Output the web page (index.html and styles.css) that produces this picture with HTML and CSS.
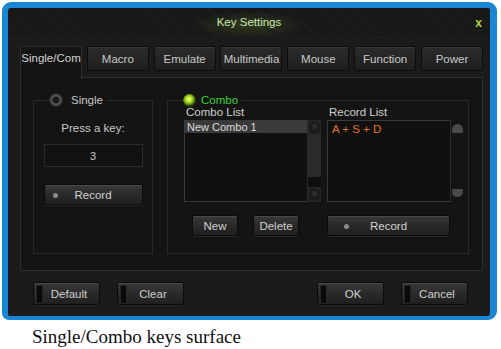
FILE: index.html
```html
<!DOCTYPE html>
<html>
<head>
<meta charset="utf-8">
<link rel="stylesheet" href="styles.css">
</head>
<body>
<div class="window">
  <div class="titlebar">
    <span></span>
    <span class="title">Key Settings</span>
    <span class="close">x</span>
  </div>
  <div class="tabs">
    <div class="tab active">Single/Com</div>
    <div class="tab">Macro</div>
    <div class="tab">Emulate</div>
    <div class="tab">Multimedia</div>
    <div class="tab">Mouse</div>
    <div class="tab">Function</div>
    <div class="tab">Power</div>
  </div>
  <div class="panel">
    <div class="group single">
      <div class="group-head">
        <span class="radio"></span><span class="head-text">Single</span>
      </div>
      <div class="press">Press a key:</div>
      <div class="keybox">3</div>
      <div class="btn rec rec-left">Record</div>
    </div>
    <div class="group combo">
      <div class="group-head">
        <span class="radio on"></span><span class="head-text green">Combo</span>
      </div>
      <div class="cols">
        <div class="col">
          <div class="label">Combo List</div>
          <div class="listwrap">
            <div class="list">
              <div class="item sel">New Combo 1</div>
            </div>
            <div class="sbar">
              <div class="sb-btn up"></div>
              <div class="sb-track"></div>
              <div class="sb-thumb"></div>
              <div class="sb-btn down"></div>
            </div>
          </div>
          <div class="btnrow">
            <div class="btn small">New</div>
            <div class="btn small">Delete</div>
          </div>
        </div>
        <div class="col">
          <div class="label">Record List</div>
          <div class="listwrap">
            <div class="list">
              <div class="item orange">A + S + D</div>
            </div>
            <div class="sbar plain">
              <div class="arrow-up"></div>
              <div class="arrow-down"></div>
            </div>
          </div>
          <div class="btnrow">
            <div class="btn rec rec-right">Record</div>
          </div>
        </div>
      </div>
    </div>
  </div>
  <div class="footer">
    <div class="btn fbtn">Default</div>
    <div class="btn fbtn">Clear</div>
    <div class="btn fbtn push">OK</div>
    <div class="btn fbtn">Cancel</div>
  </div>
</div>
<p class="caption">Single/Combo keys surface</p>
</body>
</html>
```
FILE: styles.css
```css
* { box-sizing: border-box; }
html, body { margin: 0; padding: 0; background: #fff; }
body { width: 501px; height: 349px; overflow: hidden; }

.window {
  margin: 2px 0 0 2px;
  width: 495px;
  height: 318px;
  border-style: solid;
  border-color: #1a86d6;
  border-width: 6px 7px 4px 6px;
  border-radius: 9px 9px 9px 7px;
  background: #1b1b1b;
  font-family: "Liberation Sans", Arial, sans-serif;
  font-size: 11.5px;
  color: #c8c8c8;
  overflow: hidden;
}

.titlebar {
  height: 28px;
  display: grid;
  grid-template-columns: 1fr auto 1fr;
  align-items: center;
  background:
    radial-gradient(ellipse 60px 14px at 50% 60%, rgba(100,140,40,0.28), rgba(100,140,40,0) 100%),
    repeating-linear-gradient(45deg, #151515 0 1px, #1c1c1c 1px 2px);
  border-radius: 4px 4px 0 0;
}
.title {
  color: #cde6ac;
  font-size: 11.5px;
}
.close {
  justify-self: end;
  color: #b6d23a;
  font-size: 12px;
  font-weight: bold;
  padding: 2px 8px 0 0;
}

.tabs {
  margin: 10px 7px 0 12px;
  height: 32px;
  display: flex;
  justify-content: space-between;
  align-items: flex-start;
}
.tab {
  width: 62px;
  height: 25px;
  display: flex;
  align-items: center;
  justify-content: center;
  background: linear-gradient(#2b2b2b, #1f1f1f);
  border: 1px solid #0c0c0c;
  box-shadow: inset 0 1px 0 #383838;
  border-radius: 2px;
  white-space: nowrap;
  overflow: hidden;
  color: #c8c8c8;
}
.tab.active {
  height: 33px;
  align-items: flex-start;
  padding-top: 5px;
  background: #141414;
  border: 1px solid #2e2e2e;
  border-bottom: none;
  box-shadow: none;
  border-radius: 2px 2px 0 0;
  position: relative;
  z-index: 1;
  color: #d2d2d2;
}

.panel {
  margin: -1px 7px 0 12px;
  height: 194px;
  border: 1px solid #2e2e2e;
  background: #141414;
  padding: 22px 0 0 12px;
  display: flex;
  gap: 14px;
  align-items: flex-start;
}

.group {
  height: 154px;
  border: 1px solid #292929;
  display: flex;
  flex-direction: column;
}
.single { width: 120px; align-items: center; }
.combo { width: 302px; }

.group-head {
  align-self: flex-start;
  margin: -7px 0 0 15px;
  height: 12px;
  display: flex;
  align-items: center;
  background: #141414;
  padding-right: 3px;
}
.radio {
  flex: none;
  width: 14px;
  height: 14px;
  border-radius: 50%;
  background: radial-gradient(circle at 50% 50%, #1a1a1a 0 3px, #5a5a5a 4px, #3a3a3a 6px, #222 7px);
}
.radio.on {
  width: 13px;
  height: 13px;
  background: radial-gradient(circle at 45% 40%, #e8ff70 0 1px, #a8e020 3px, #6aa010 5px, #2a3a10 6.5px);
}
.head-text { margin-left: 8px; line-height: 12px; }
.green { color: #3cd23c; margin-left: 5px; }

.press {
  margin-top: 15px;
  line-height: 14px;
}
.keybox {
  margin-top: 9px;
  width: 99px;
  height: 23px;
  border: 1px solid #2a2a2a;
  background: #111;
  display: flex;
  align-items: center;
  justify-content: center;
  font-size: 11px;
  color: #c8c8c8;
}

.btn {
  display: flex;
  align-items: center;
  justify-content: center;
  background: linear-gradient(#393939, #2a2a2a 50%, #1f1f1f);
  border: 1px solid #0a0a0a;
  border-radius: 2px;
  box-shadow: inset 0 1px 0 #484848, 0 1px 0 #262626;
  color: #d0d0d0;
  white-space: nowrap;
}
.rec { position: relative; height: 21px; }
.rec::before {
  content: "";
  position: absolute;
  top: 8px;
  width: 5px;
  height: 5px;
  border-radius: 50%;
  background: #8a8a8a;
}
.rec-left { margin-top: 17px; width: 99px; }
.rec-left::before { left: 8px; }
.rec-right { width: 123px; }
.rec-right::before { left: 16px; }

.cols {
  display: flex;
  gap: 6px;
  margin: 0 0 0 16px;
}
.col { width: 137px; display: flex; flex-direction: column; }
.label {
  line-height: 12px;
  margin: 0 0 2px 2px;
  color: #d0d0d0;
}
.listwrap { display: flex; height: 82px; }
.list {
  width: 124px;
  height: 82px;
  border: 1px solid #383838;
  border-right-color: #2a2a2a;
  background: #101010;
}
.item {
  height: 12px;
  line-height: 12px;
  font-size: 11px;
  padding-left: 2px;
  white-space: nowrap;
}
.item.sel { background: #3a3a3a; color: #dcdcdc; }
.item.orange { color: #e8722c; padding-left: 4px; margin-top: 2px; font-size: 11.5px; }

.sbar {
  width: 13px;
  height: 82px;
  display: flex;
  flex-direction: column;
  background: #262626;
}
.sb-btn {
  height: 13px;
  background: #1c1c1c;
  border-radius: 6px;
  margin: 1px;
  position: relative;
}
.sb-btn::after {
  content: "";
  position: absolute;
  left: 3px; top: 3px;
  width: 5px; height: 5px;
  border-radius: 50%;
  background: #2e2e2e;
}
.sb-track { flex: 1; background: #2a2a2a; }
.sb-thumb { height: 10px; background: #0e0e0e; }

.sbar.plain {
  background: transparent;
  justify-content: space-between;
  padding: 4px 0 5px 1px;
}
.arrow-up, .arrow-down {
  width: 11px;
  height: 9px;
  background: #4a4a4a;
}
.arrow-up { border-radius: 6px 6px 1px 1px; }
.arrow-down { border-radius: 1px 1px 6px 6px; height: 8px; }

.btnrow {
  margin-top: 13px;
  display: flex;
  gap: 15px;
}
.col:first-child .btnrow { padding-left: 8px; }
.btn.small { width: 46px; height: 21px; }

.footer {
  margin: 11px 22px 0 25px;
  display: flex;
  gap: 17px;
}
.fbtn {
  width: 67px;
  height: 23px;
  position: relative;
  padding-left: 5px;
}
.fbtn::before {
  content: "";
  position: absolute;
  left: 2px; top: 2px;
  width: 5px; height: 17px;
  background: #0a0a0a;
  border: 1px solid #262626;
  border-radius: 1px;
}
.push { margin-left: auto; }

.caption {
  margin: 6px 0 0 32px;
  font-family: "Liberation Serif", "Times New Roman", serif;
  font-size: 19px;
  color: #111;
}
```
